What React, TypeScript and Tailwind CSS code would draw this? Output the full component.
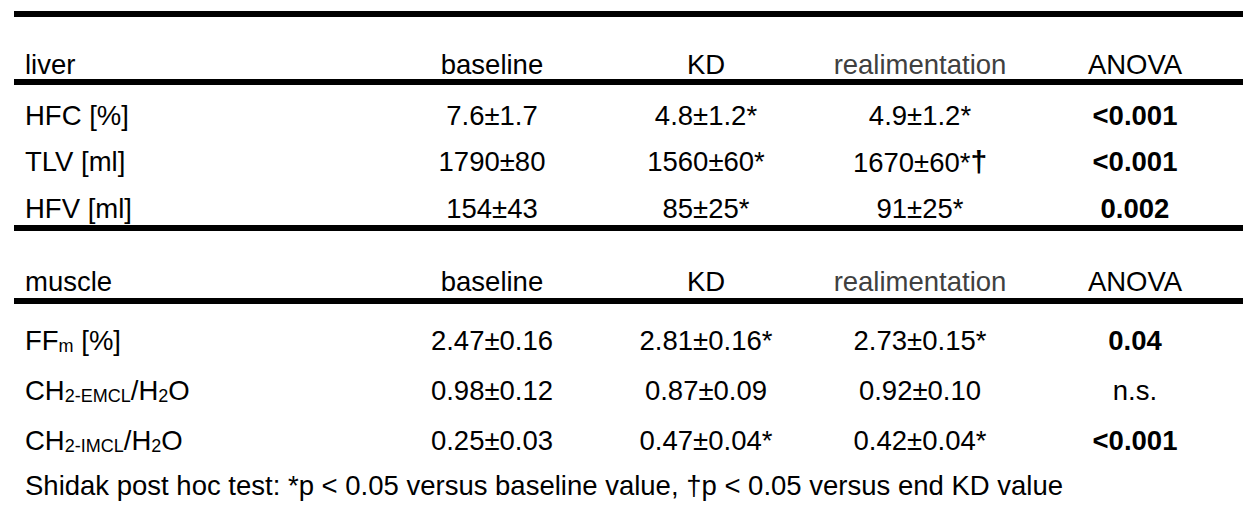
import React from 'react';

const cols = 'grid grid-cols-[371px_214px_214px_214px_216px]';

const Sub = ({ children }: { children: React.ReactNode }) => (
  <span className="relative top-[2px] text-[18px]">{children}</span>
);

const Row = ({
  label,
  values,
  h,
}: {
  label: React.ReactNode;
  values: React.ReactNode[];
  h: string;
}) => (
  <div className={`${cols} ${h}`}>
    <div className="pl-[11px]">{label}</div>
    {values.map((v, i) => (
      <div key={i} className="text-center">
        {v}
      </div>
    ))}
  </div>
);

const Header = ({ title, h }: { title: string; h: string }) => (
  <div className={`${cols} items-end ${h}`}>
    <div className="pl-[11px]">{title}</div>
    <div className="text-center">baseline</div>
    <div className="text-center">KD</div>
    <div className="text-center text-[#404040]">realimentation</div>
    <div className="text-center">ANOVA</div>
  </div>
);

const Rule = () => <div className="h-[6px] bg-black" />;

export default function App() {
  return (
    <div className="w-[1257px] h-[508px] bg-white text-black text-[27.5px] leading-none font-['Liberation_Sans',Arial,sans-serif] pt-[11px]">
      <div className="ml-[14px] w-[1229px]">
        <Rule />
        <Header title="liver" h="h-[62px] pb-[1px]" />
        <Rule />
        <div className="pt-[8px]">
          <Row h="h-[46px] items-center" label="HFC [%]" values={['7.6±1.7', '4.8±1.2*', '4.9±1.2*', <b key="a">&lt;0.001</b>]} />
          <Row
            h="h-[46px] items-center"
            label="TLV [ml]"
            values={[
              '1790±80',
              '1560±60*',
              <span key="t">
                1670±60*<b className="text-[30px]">†</b>
              </span>,
              <b key="b">&lt;0.001</b>,
            ]}
          />
          <Row h="h-[40px] items-end pb-[3px]" label="HFV [ml]" values={['154±43', '85±25*', '91±25*', <b key="c">0.002</b>]} />
        </div>
        <Rule />
        <Header title="muscle" h="h-[67px] pb-[3px]" />
        <Rule />
        <div className="pt-[12px]">
          <Row
            h="h-[50px] items-center"
            label={
              <span>
                FF<Sub>m</Sub> [%]
              </span>
            }
            values={['2.47±0.16', '2.81±0.16*', '2.73±0.15*', <b key="d">0.04</b>]}
          />
          <Row
            h="h-[50px] items-center"
            label={
              <span>
                CH<Sub>2-EMCL</Sub>/H<Sub>2</Sub>O
              </span>
            }
            values={['0.98±0.12', '0.87±0.09', '0.92±0.10', 'n.s.']}
          />
          <Row
            h="h-[50px] items-center"
            label={
              <span>
                CH<Sub>2-IMCL</Sub>/H<Sub>2</Sub>O
              </span>
            }
            values={['0.25±0.03', '0.47±0.04*', '0.42±0.04*', <b key="e">&lt;0.001</b>]}
          />
        </div>
        <div className="pl-[11px] pt-[6px]">
          Shidak post hoc test: *p &lt; 0.05 versus baseline value, †p &lt; 0.05 versus end KD value
        </div>
      </div>
    </div>
  );
}
